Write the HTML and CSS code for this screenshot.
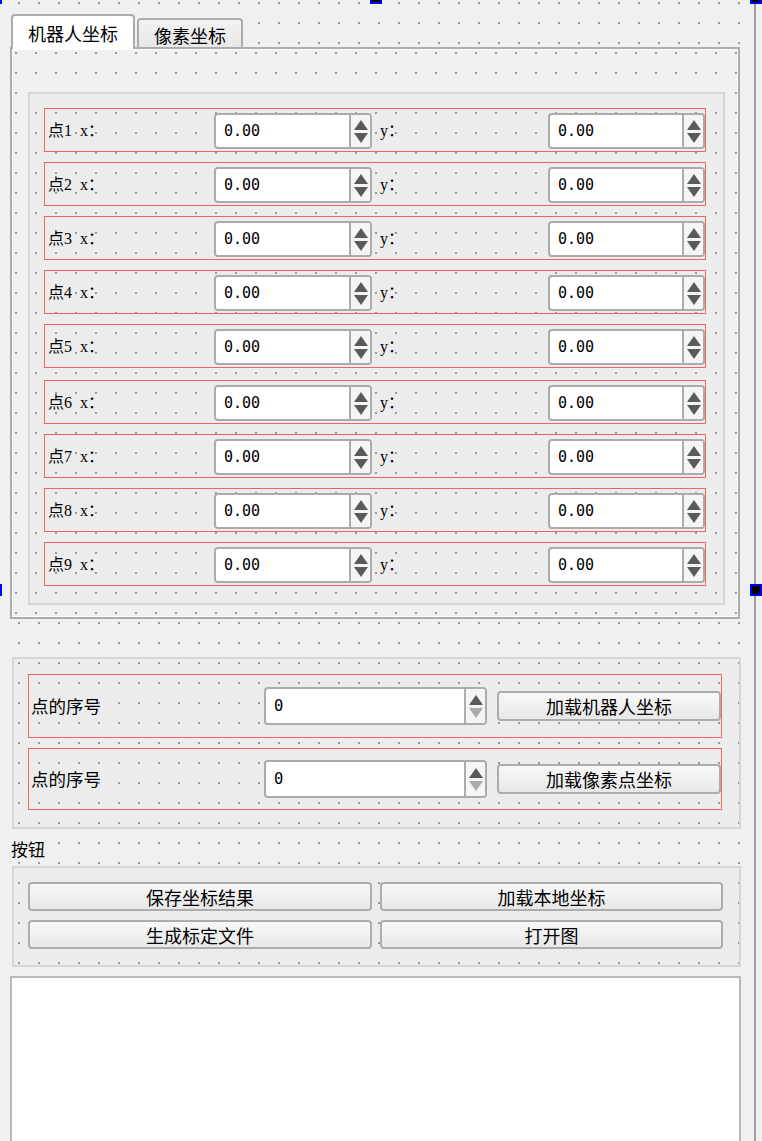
FILE: index.html
```html
<!DOCTYPE html>
<html lang="zh-CN">
<head>
  <meta charset="UTF-8">
  <title>标定</title>
  <link rel="stylesheet" href="styles.css">
</head>
<body>
  <div class="form">
    <div class="tabbar">
      <div class="tab active">机器人坐标</div>
      <div class="tab idle">像素坐标</div>
    </div>

    <div class="pane">
      <div class="group points">
        <div class="row"><span class="lbl lbl-x">点1  x：</span><div class="spin"><span class="spin-val">0.00</span><span class="spin-btns"></span></div><span class="lbl lbl-y">y：</span><div class="spin"><span class="spin-val">0.00</span><span class="spin-btns"></span></div></div>
        <div class="row"><span class="lbl lbl-x">点2  x：</span><div class="spin"><span class="spin-val">0.00</span><span class="spin-btns"></span></div><span class="lbl lbl-y">y：</span><div class="spin"><span class="spin-val">0.00</span><span class="spin-btns"></span></div></div>
        <div class="row"><span class="lbl lbl-x">点3  x：</span><div class="spin"><span class="spin-val">0.00</span><span class="spin-btns"></span></div><span class="lbl lbl-y">y：</span><div class="spin"><span class="spin-val">0.00</span><span class="spin-btns"></span></div></div>
        <div class="row"><span class="lbl lbl-x">点4  x：</span><div class="spin"><span class="spin-val">0.00</span><span class="spin-btns"></span></div><span class="lbl lbl-y">y：</span><div class="spin"><span class="spin-val">0.00</span><span class="spin-btns"></span></div></div>
        <div class="row"><span class="lbl lbl-x">点5  x：</span><div class="spin"><span class="spin-val">0.00</span><span class="spin-btns"></span></div><span class="lbl lbl-y">y：</span><div class="spin"><span class="spin-val">0.00</span><span class="spin-btns"></span></div></div>
        <div class="row wide-gap"><span class="lbl lbl-x">点6  x：</span><div class="spin"><span class="spin-val">0.00</span><span class="spin-btns"></span></div><span class="lbl lbl-y">y：</span><div class="spin"><span class="spin-val">0.00</span><span class="spin-btns"></span></div></div>
        <div class="row"><span class="lbl lbl-x">点7  x：</span><div class="spin"><span class="spin-val">0.00</span><span class="spin-btns"></span></div><span class="lbl lbl-y">y：</span><div class="spin"><span class="spin-val">0.00</span><span class="spin-btns"></span></div></div>
        <div class="row"><span class="lbl lbl-x">点8  x：</span><div class="spin"><span class="spin-val">0.00</span><span class="spin-btns"></span></div><span class="lbl lbl-y">y：</span><div class="spin"><span class="spin-val">0.00</span><span class="spin-btns"></span></div></div>
        <div class="row"><span class="lbl lbl-x">点9  x：</span><div class="spin"><span class="spin-val">0.00</span><span class="spin-btns"></span></div><span class="lbl lbl-y">y：</span><div class="spin"><span class="spin-val">0.00</span><span class="spin-btns"></span></div></div>
      </div>
    </div>

    <div class="group load">
      <div class="lrow">
        <span class="name">点的序号</span>
        <div class="spin wide at-min"><span class="spin-val">0</span><span class="spin-btns"></span></div>
        <button class="btn">加载机器人坐标</button>
      </div>
      <div class="lrow">
        <span class="name">点的序号</span>
        <div class="spin wide at-min"><span class="spin-val">0</span><span class="spin-btns"></span></div>
        <button class="btn">加载像素点坐标</button>
      </div>
    </div>

    <div class="caption">按钮</div>

    <div class="group actions">
      <button class="btn">保存坐标结果</button>
      <button class="btn">加载本地坐标</button>
      <button class="btn">生成标定文件</button>
      <button class="btn">打开图</button>
    </div>

    <div class="log"></div>
  </div>

  <!-- designer selection handles -->
  <span class="handle h-tl"></span>
  <span class="handle h-tm"></span>
  <span class="handle h-tr"></span>
  <span class="handle h-ml"></span>
  <span class="handle h-mr"></span>
</body>
</html>
```

FILE: styles.css
```css
body { margin: 0; height: 1141px; overflow: hidden; position: relative; background: #f0f0f0; color: #000; font-family: "Noto Sans CJK SC", sans-serif; }

/* designer grid: 2px dots every 20px */
.form { box-sizing: border-box; width: 756px; height: 1141px; padding-top: 14px; border-right: 2px solid #a0a0a0; overflow: hidden;
  background: conic-gradient(at 2px 2px, transparent 75%, #999 0) 18px 2px / 20px 20px fixed #f0f0f0; }

.tabbar { display: flex; align-items: flex-end; gap: 2px; height: 35px; margin: 0 0 -2px 11px; position: relative; z-index: 1; }
.tab { box-sizing: border-box; display: flex; align-items: center; justify-content: center; border: 2px solid #acacac; border-bottom: 0; border-radius: 4px 4px 0 0; font-size: 18px; line-height: 20px; }
.tab.active { width: 124px; height: 35px; background: #fff; }
.tab.idle { width: 106px; height: 29px; margin-bottom: 2px; padding-top: 2px; background: linear-gradient(#f2f2f2, #e8e8e8); }

.pane { box-sizing: border-box; width: 730px; height: 572px; margin-left: 10px; padding: 43px 0 0 16px; border: 2px solid #acacac;
  box-shadow: inset 1px 1px 0 #fff, inset -1px -1px 0 #fff;
  background: conic-gradient(at 2px 2px, transparent 75%, #999 0) 15px 12px / 20px 20px fixed #f0f0f0; }

.group { box-sizing: border-box; border: 2px solid #d6d6d6;
  background: conic-gradient(at 2px 2px, transparent 75%, #999 0) 18px 2px / 20px 20px fixed #ececec; }
.points { width: 697px; height: 513px; padding: 14px 17px 0 14px; background-position: 15px 12px; }

.row { box-sizing: border-box; display: flex; align-items: center; height: 44px; padding-top: 2px; border: 1px solid #f26464; }
.row + .row { margin-top: 10px; }
.row.wide-gap { margin-top: 12px; }

.lbl { box-sizing: border-box; font-family: "Liberation Serif", "Noto Sans CJK SC", serif; font-size: 16px; line-height: 20px; white-space: pre; }
.lbl-x { width: 169px; padding-left: 3px; }
.lbl-y { width: 176px; padding-left: 8px; }

.spin { box-sizing: border-box; display: flex; width: 158px; height: 36px; border: 2px solid #ababab; border-radius: 4px; background: #fff; overflow: hidden; }
.row .spin:last-child { width: 157px; }
.spin-val { flex: 1; padding-left: 8px; font: 15px/32px "DejaVu Sans Mono", monospace; }
.spin-btns { width: 19px; border-left: 2px solid #adadad; background: #f5f5f5; display: flex; flex-direction: column; align-items: center; justify-content: center; gap: 3px; }
.spin-btns::before { content: ""; border-left: 7.5px solid transparent; border-right: 7.5px solid transparent; border-bottom: 10px solid #5a5a5a; }
.spin-btns::after { content: ""; border-left: 7.5px solid transparent; border-right: 7.5px solid transparent; border-top: 10px solid #5a5a5a; }
.at-min .spin-btns::after { border-top-color: #ababab; }

.load { width: 729px; height: 172px; margin: 38px 0 0 12px; padding: 15px 17px 0 14px; }
.lrow { box-sizing: border-box; display: flex; align-items: center; height: 64px; padding-left: 2px; border: 1px solid #f26464; }
.lrow + .lrow { margin-top: 10px; height: 62px; }
.lrow .name { flex: 1; font-size: 17.5px; line-height: 20px; }
.spin.wide { width: 223px; height: 38px; }
.spin.wide .spin-val { font-size: 15.5px; line-height: 34px; }

.btn { box-sizing: border-box; padding: 0; border: 2px solid #adadad; border-radius: 4px; background: linear-gradient(#f8f8f8, #e8e8e8); color: #000; font-family: "Noto Sans CJK SC", sans-serif; font-size: 18px; line-height: 20px; }
.lrow .btn { width: 224px; height: 30px; margin-left: 10px; }

.caption { box-sizing: border-box; height: 37px; padding: 10px 0 0 11px; font-size: 17px; line-height: 20px; }

.actions { width: 729px; height: 101px; margin-left: 12px; padding: 14px 16px 0 14px; display: grid; grid-template-columns: 344px 343px; grid-auto-rows: 29px; column-gap: 8px; row-gap: 9px; align-content: start; }

.log { box-sizing: border-box; width: 731px; height: 200px; margin: 9px 0 0 10px; border: 2px solid #b9b9b9; background: #fff; }

.handle { position: absolute; z-index: 5; width: 8px; height: 8px; border: 2px solid #0000ff; background: #000; }
.h-tl { left: -10px; top: -8px; }
.h-tm { left: 370px; top: -8px; }
.h-tr { left: 750px; top: -8px; }
.h-ml { left: -10px; top: 584px; }
.h-mr { left: 750px; top: 584px; }
```
